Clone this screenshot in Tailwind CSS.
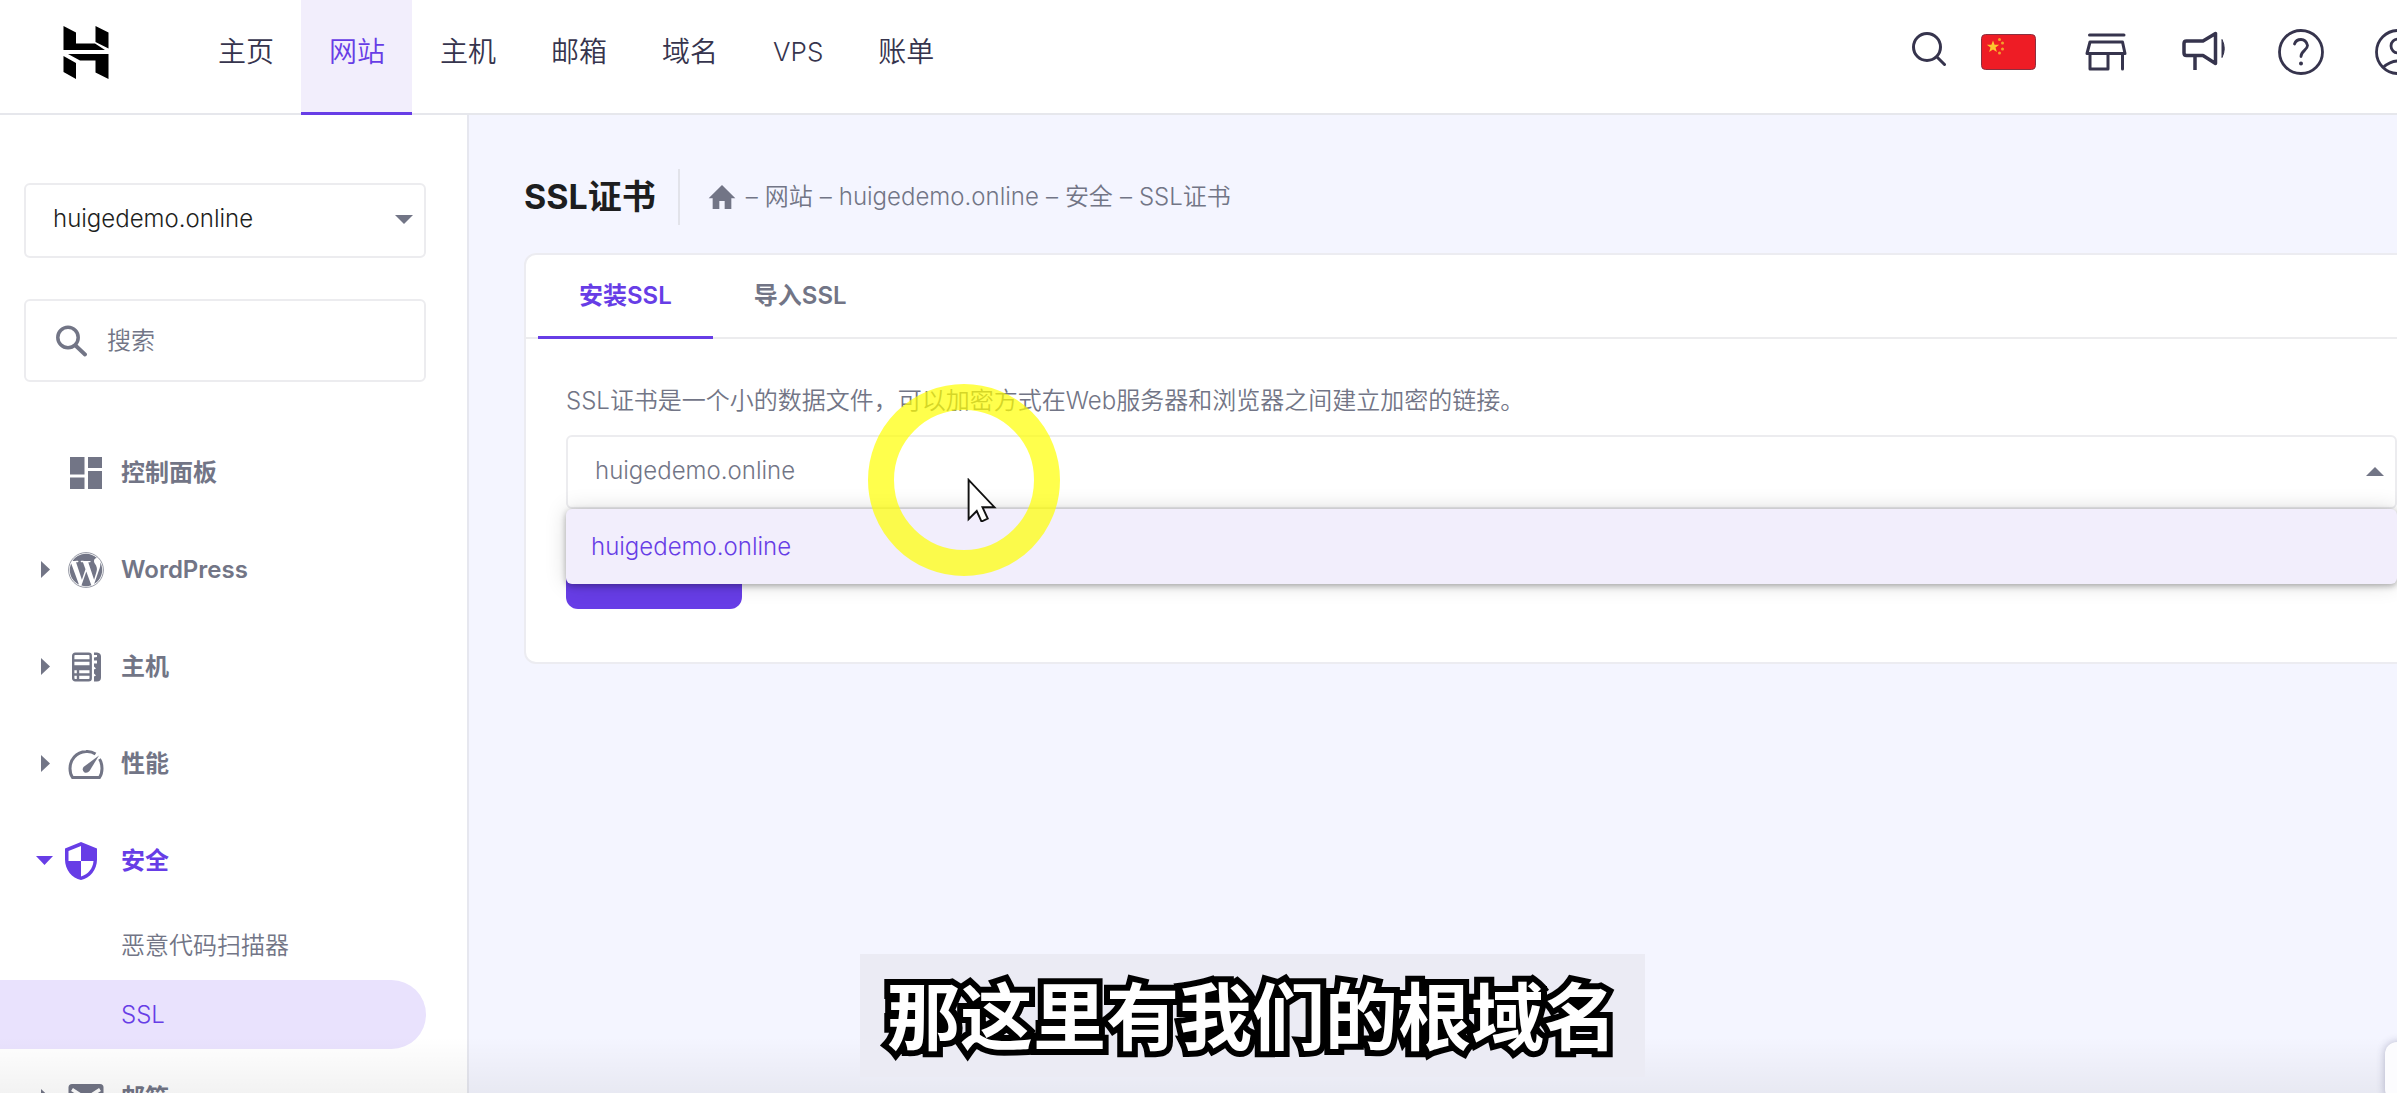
<!DOCTYPE html>
<html lang="zh-CN">
<head>
<meta charset="utf-8">
<title>SSL证书</title>
<script src="https://cdn.jsdelivr.net/npm/@tailwindcss/browser@4"></script>
</head>
<body class="relative flex h-screen flex-col overflow-hidden bg-[#f4f5ff] font-['Inter','Noto_Sans_CJK_SC',sans-serif] text-2xl font-[350] text-[#727586]">

<header class="flex h-[115px] shrink-0 items-stretch justify-between border-b-2 border-[#e6e7ec] bg-white">
  <div class="flex">
    <a href="#" aria-label="首页" class="mr-[81px] ml-[63px] flex items-start pt-[26px]">
      <svg class="h-[53px] w-[46px]" viewBox="0 0 46 53" fill="#000"><path d="M.5 0l12.500 6.500v11h19L42 24H.5zM32.500 0L45.500 6.500v16L32.500 16z"/><path d="M5 28h40.500v25l-13-6.500V34.500H17zM.5 30l12.500 7v16L.5 46z"/></svg>
    </a>
    <nav class="-mb-0.5 flex text-[28px] text-[#36344d]">
      <a href="#" class="flex items-center pr-[27px] pb-2.5 pl-7">主页</a>
      <a href="#" class="flex items-center border-b-3 border-[#673de6] bg-[#f2eefc] pr-[27px] pb-[7px] pl-7 text-[#673de6]">网站</a>
      <a href="#" class="flex items-center pr-[27px] pb-2.5 pl-7">主机</a>
      <a href="#" class="flex items-center pr-[27px] pb-2.5 pl-7">邮箱</a>
      <a href="#" class="flex items-center pr-[27px] pb-2.5 pl-7">域名</a>
      <a href="#" class="flex items-center pr-[27px] pb-2.5 pl-7 text-[26px]">VPS</a>
      <a href="#" class="flex items-center pr-[27px] pb-2.5 pl-7">账单</a>
    </nav>
  </div>
  <div class="-mr-6 flex items-center gap-12 pb-2.5">
    <div class="flex items-center gap-[35px]">
      <button type="button" aria-label="搜索" class="pb-1.5"><svg class="h-9 w-[34px]" viewBox="0 0 34 36" fill="none" stroke="#36344d" stroke-width="3" stroke-linecap="round"><circle cx="15" cy="16" r="13.500"/><path d="M25 26l7.500 7.500"/></svg></button>
      <button type="button" aria-label="语言"><svg class="h-9 w-[55px]" viewBox="0 0 55 36"><rect x=".5" y=".5" width="54" height="35" rx="4" fill="#ee1c25" stroke="#8a3040"/><path fill="#fcc62e" d="M12 6.500l1.600 4.300h4.600l-3.700 2.800 1.400 4.500-3.900-2.700-3.900 2.700 1.400-4.500-3.700-2.800h4.600z"/><g fill="#f3a12c"><circle cx="18.500" cy="5.500" r="1.500"/><circle cx="21.500" cy="9" r="1.500"/><circle cx="21.500" cy="15" r="1.500"/><circle cx="18.500" cy="19" r="1.500"/></g></svg></button>
    </div>
    <div class="flex items-center gap-[51px]">
      <button type="button" aria-label="商店"><svg class="size-[46px]" viewBox="0 0 46 46" fill="none" stroke="#36344d" stroke-width="3" stroke-linejoin="round" stroke-linecap="round"><path d="M5.500 6h34.500M6 13h32.500l2.500 11.500H3zM6 25v15h18V25M38.500 25v15"/></svg></button>
      <button type="button" aria-label="公告"><svg class="size-[46px]" viewBox="0 0 46 46" fill="none" stroke="#36344d" stroke-width="3.500" stroke-linejoin="round"><path d="M3 14.500q0-2.500 2.500-2.500H22L34.500 4.500v30L22 26.500H5.500Q3 26.500 3 24zM14 27v14"/><path d="M41 10.500q4.500 9 0 18z" fill="#36344d" stroke-width="1"/></svg></button>
      <button type="button" aria-label="帮助"><svg class="size-[46px]" viewBox="0 0 46 46" fill="none" stroke="#36344d" stroke-width="2.800" stroke-linecap="round"><circle cx="23" cy="23" r="21.500"/><path d="M16.500 15Q18 10.500 23 10.500t6.500 6c0 4.500-6.500 5.500-6.500 11"/><circle cx="23" cy="34.500" r="2" fill="#36344d" stroke="none"/></svg></button>
      <button type="button" aria-label="账户"><svg class="size-[46px]" viewBox="0 0 46 46" fill="none" stroke="#36344d" stroke-width="2.800"><circle cx="23" cy="23" r="21.500"/><circle cx="23" cy="17" r="7"/><path d="M8 38.500q15-13 30 0"/></svg></button>
    </div>
  </div>
</header>

<div class="flex min-h-0 flex-1">
  <aside class="flex w-[469px] shrink-0 flex-col overflow-hidden border-r-2 border-[#e6e7ef] bg-white pt-[68px]">
    <div class="relative mr-[41px] ml-6 shrink-0">
      <select aria-label="网站" class="h-[75px] w-full appearance-none rounded-md border-2 border-[#ececef] bg-white pb-1 pl-[27px] text-2xl text-[#1d1e20]"><option>huigedemo.online</option></select>
      <svg class="pointer-events-none absolute top-8 right-[13px] h-[9px] w-[18px]" viewBox="0 0 18 9" fill="#727586"><path d="M0 0h18L9 9z"/></svg>
    </div>
    <label class="mt-[41px] mr-[41px] ml-6 flex h-[83px] shrink-0 items-center gap-5 rounded-md border-2 border-[#ececef] px-[30px]">
      <svg class="h-8 w-[31px] shrink-0" viewBox="0 0 31 32" fill="none" stroke="#727586" stroke-width="3.500" stroke-linecap="round"><circle cx="12" cy="12.500" r="10.200"/><path d="M19.500 20.500l9.500 9" stroke-width="3.800"/></svg>
      <input type="search" placeholder="搜索" aria-label="搜索" class="w-full min-w-0 outline-none placeholder:text-[#727586]">
    </label>
    <nav class="mt-[42px] shrink-0 font-semibold">
      <a href="#" class="flex h-[97px] items-center pl-[68px]">
        <svg class="mr-[17px] size-9" viewBox="-2 -2 36 36" fill="#727586"><path d="M0 0h14.500v17.500H0zM0 20.500h14.500v11.500H0zM18 0h14v11H18zM18 14h14v18H18z"/></svg>控制面板</a>
      <a href="#" class="flex h-[97px] items-center pl-[41px]">
        <svg class="mr-[18px] h-[17px] w-[9px]" viewBox="0 0 9 17" fill="#727586"><path d="M0 0l9 8.500L0 17z"/></svg>
        <svg class="mr-[17px] size-9" viewBox="0 0 24 24" fill="#727586"><circle cx="12" cy="12" r="11.600" fill="none" stroke="#727586" stroke-width=".5"/><path d="M21.469 6.825c.84 1.537 1.318 3.300 1.318 5.175 0 3.979-2.156 7.456-5.363 9.325l3.295-9.527c.615-1.540.82-2.771.82-3.864 0-.405-.026-.78-.07-1.110m-7.981.105c.647-.03 1.232-.105 1.232-.105.582-.075.514-.93-.067-.899 0 0-1.755.135-2.880.135-1.064 0-2.850-.15-2.850-.15-.585-.03-.661.855-.075.885 0 0 .54.061 1.125.09l1.680 4.605-2.370 7.080L5.354 6.900c.649-.03 1.234-.1 1.234-.1.585-.075.516-.93-.065-.896 0 0-1.746.138-2.874.138-.2 0-.438-.008-.69-.015C4.911 3.150 8.235 1.215 12 1.215c2.809 0 5.365 1.072 7.286 2.833-.046-.003-.091-.009-.141-.009-1.060 0-1.812.923-1.812 1.914 0 .89.513 1.643 1.060 2.531.411.72.89 1.643.89 2.977 0 .915-.354 1.994-.821 3.479l-1.075 3.585-3.900-11.610zM12 22.784c-1.059 0-2.081-.153-3.048-.437l3.237-9.406 3.315 9.087c.024.053.05.101.078.149-1.120.393-2.325.609-3.582.609M1.211 12c0-1.564.336-3.050.935-4.390L7.290 21.709C3.694 19.960 1.212 16.271 1.211 12"/></svg>WordPress</a>
      <a href="#" class="flex h-[97px] items-center pl-[41px]">
        <svg class="mr-[18px] h-[17px] w-[9px]" viewBox="0 0 9 17" fill="#727586"><path d="M0 0l9 8.500L0 17z"/></svg>
        <svg class="mr-[17px] size-9" viewBox="0 0 36 36" fill="none" stroke="#727586" stroke-width="2.400"><rect x="5.200" y="4.700" width="17.500" height="26.500" rx="2"/><path d="M5 11.500h18M5 17.500h18M5 20h18M5 25.500h18M10 20v11"/><path d="M26 3.500h3q4 .5 4 4v21q0 4-4 4h-3v-5l2-1-2-2v-4l2-1-2-2v-3h3v-3h-3v-3l3-.5v-2h-3z" fill="#727586" stroke="none"/></svg>主机</a>
      <a href="#" class="flex h-[97px] items-center pl-[41px]">
        <svg class="mr-[18px] h-[17px] w-[9px]" viewBox="0 0 9 17" fill="#727586"><path d="M0 0l9 8.500L0 17z"/></svg>
        <svg class="mr-[17px] size-9" viewBox="0 0 36 36" fill="none" stroke="#727586" stroke-width="3"><path d="M27.500 8Q23 5 18 5.500C8 6 2 14 2 22.500q0 5.500 2.500 9h27Q34 28 34 22.500q0-5.500-2.500-9.500"/><path d="M31 9.500L21.500 25q-2 2.500-5 1.500-3-2-1-5.500z" fill="#727586" stroke="none"/></svg>性能</a>
      <a href="#" class="flex h-[97px] items-center pl-9 text-[#673de6]">
        <svg class="mr-3 h-[9px] w-[17px]" viewBox="0 0 17 9" fill="#673de6"><path d="M0 0h17L8.500 9z"/></svg>
        <svg class="mr-6 h-[38px] w-8" viewBox="0 0 32 38" fill="#673de6"><path fill-rule="evenodd" d="M16 0l16 6.500v11C32 28 25 36 16 38 7 36 0 28 0 17.500v-11zM16 4L3.500 9v10H16zm0 15v15.500c7-2 12-8 12.500-15.500z"/></svg>安全</a>
      <ul class="mt-0.5 font-[350]">
        <li><a href="#" class="flex h-[69px] items-center pl-[121px]">恶意代码扫描器</a></li>
        <li><a href="#" class="mr-[41px] flex h-[69px] items-center rounded-r-full bg-[#e9e2fd] pl-[121px] text-[#673de6]">SSL</a></li>
      </ul>
      <a href="#" class="flex h-[97px] items-center pl-[41px]">
        <svg class="mr-[18px] h-[17px] w-[9px]" viewBox="0 0 9 17" fill="#727586"><path d="M0 0l9 8.500L0 17z"/></svg>
        <svg class="mr-[17px] size-9" viewBox="0 0 36 36"><rect x=".5" y="4" width="35" height="28" rx="3.500" fill="#727586"/><path d="M4 9.500l14 9 14-9" fill="none" stroke="#fff" stroke-width="3.500"/></svg>邮箱</a>
    </nav>
  </aside>

  <main class="-mr-[42px] flex-1 pl-[55px]">
    <div class="mt-[54px] flex h-14 items-center">
      <h1 class="pr-[22px] text-[34px] font-bold text-[#1d1e20]">SSL证书</h1>
      <nav aria-label="路径" class="flex h-full items-center border-l-2 border-[#e2e3ea] pl-[26px]">
        <a href="#" aria-label="首页"><svg class="size-8" viewBox="0 0 24 24" fill="#727586"><path d="M10 21v-6h4v6h5v-8h3L12 3 2 13h3v8z"/></svg></a>
        <span class="flex gap-[7px] pl-2"><span>–</span><a href="#">网站</a><span>–</span><a href="#">huigedemo.online</a><span>–</span><a href="#">安全</a><span>–</span><a href="#">SSL证书</a></span>
      </nav>
    </div>

    <section class="mt-7 h-[411px] rounded-xl border-2 border-[#ececf1] bg-white">
      <div role="tablist" class="flex h-[84px] border-b-2 border-[#ececee] pl-3 font-semibold">
        <button type="button" role="tab" aria-selected="true" class="-mb-0.5 border-b-3 border-[#673de6] px-[41px] text-[#673de6]">安装SSL</button>
        <button type="button" role="tab" aria-selected="false" class="-mb-0.5 border-b-3 border-transparent px-[41px]">导入SSL</button>
      </div>
      <div class="px-10">
        <p class="mt-11 leading-9">SSL证书是一个小的数据文件，可以加密方式在Web服务器和浏览器之间建立加密的链接。</p>
        <div class="relative mt-4">
          <select aria-label="域名" class="h-[74px] w-full appearance-none rounded-md border-2 border-[#ececef] bg-white pb-0.5 pl-[27px] text-2xl"><option>huigedemo.online</option></select>
          <svg class="pointer-events-none absolute top-8 right-[13px] h-[9px] w-[18px]" viewBox="0 0 18 9" fill="#727586"><path d="M0 9h18L9 0z"/></svg>
          <ul role="listbox" class="absolute inset-x-0 top-full z-10 rounded-md bg-[#f2eefc] shadow-[0_2px_6px_rgba(0,0,0,0.3),0_0_22px_rgba(0,0,0,0.14)]">
            <li role="option" aria-selected="true" class="flex h-[75px] items-center pl-[25px] text-[#673de6]">huigedemo.online</li>
          </ul>
        </div>
        <button type="button" aria-label="安装SSL" class="mt-9 block h-16 w-44 rounded-xl bg-[#673de6]"></button>
      </div>
    </section>
  </main>
</div>

<div class="pointer-events-none absolute inset-x-0 bottom-0 h-14 bg-linear-to-b from-transparent to-black/5"></div>
<button type="button" aria-label="聊天" class="absolute -right-11 -bottom-2 h-[59px] w-14 rounded-xl bg-[#fcfcfe] shadow-[0_0_8px_rgba(40,40,90,0.3)]"></button>

<div class="pointer-events-none absolute top-96 left-[868px] z-20 size-48 rounded-full border-[26px] border-[#ffff00]/70"></div>
<svg class="pointer-events-none absolute top-[478px] left-[966px] z-20 h-11 w-8" viewBox="0 0 32 46" fill="#fff" stroke="#111" stroke-width="2"><path d="M2 2v41l8.500-8.500 5 11 6.500-3-5.500-12H29z"/></svg>

<p class="absolute bottom-4 left-[860px] z-20 flex h-[123px] items-center bg-[#ebebf4] pt-1 pr-7 pl-[27px] text-[73px] font-bold whitespace-nowrap text-white [-webkit-text-stroke:12px_#000] [paint-order:stroke_fill] [stroke-linejoin:round]">那这里有我们的根域名</p>

</body>
</html>
